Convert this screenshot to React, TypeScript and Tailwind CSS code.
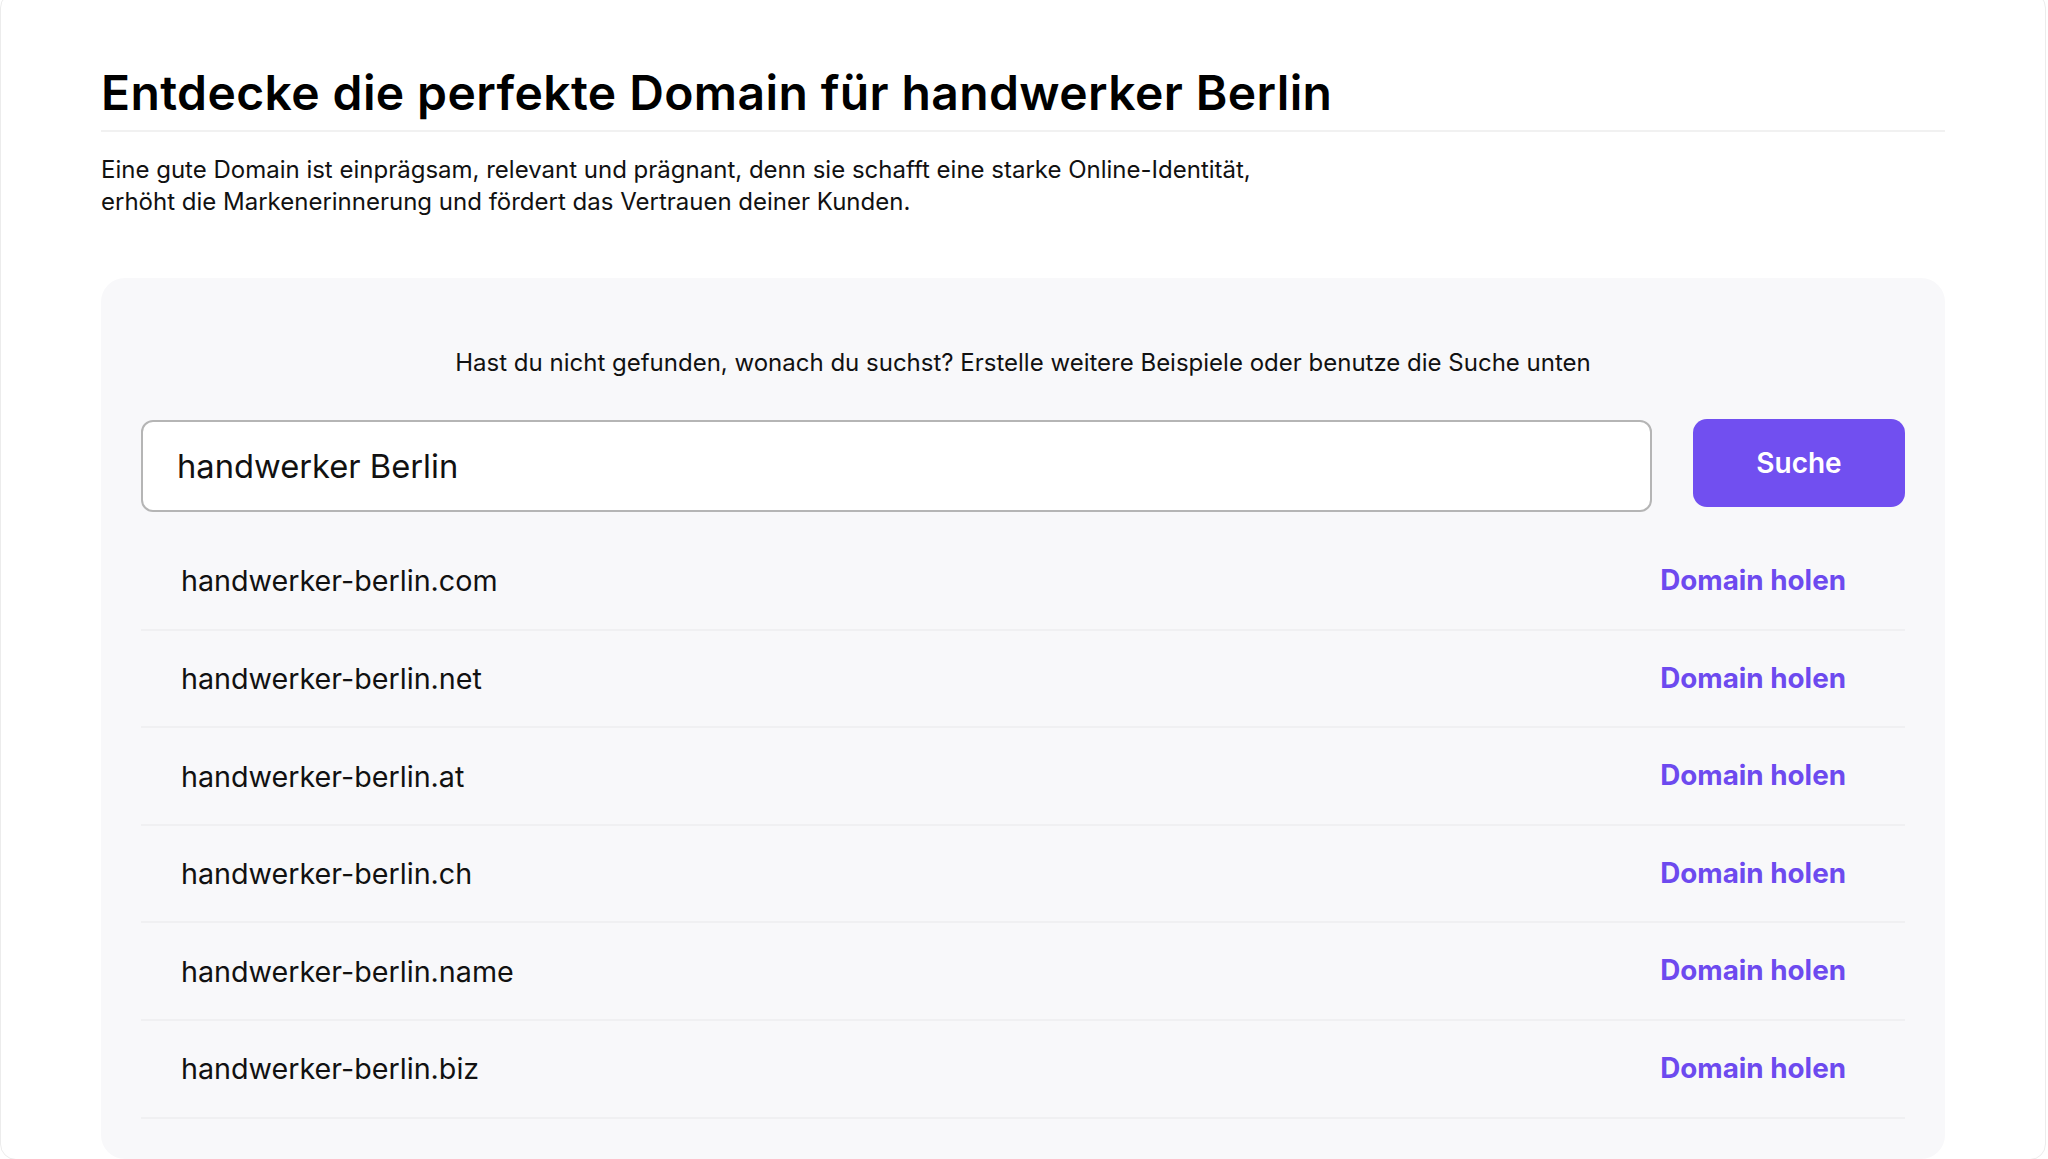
import React, { useState } from 'react';

const extensions = ['com', 'net', 'at', 'ch', 'name', 'biz'];

const App: React.FC = () => {
    const [query, setQuery] = useState('handwerker Berlin');
    const slug = query.trim().toLowerCase().replace(/\s+/g, '-');

    return (
        <div className="min-h-screen bg-white font-['Inter','Noto_Sans',sans-serif] text-[#0a0a0a] overflow-hidden">
            <div className="-mt-2 mr-[2px] rounded-2xl border border-[#ececec] bg-white px-[100px] pt-[71px]">
                {/* Header */}
                <h1 className="border-b-2 border-[#f1f1f1] pb-[8px] text-[48px] font-semibold leading-[1.2] tracking-[0.4px] text-black">
                    Entdecke die perfekte Domain für handwerker Berlin
                </h1>
                <p className="mt-[22px] text-[24px] leading-[32px] text-[#111]">
                    Eine gute Domain ist einprägsam, relevant und prägnant, denn sie schafft eine starke Online-Identität,
                    <br />
                    erhöht die Markenerinnerung und fördert das Vertrauen deiner Kunden.
                </p>

                {/* Suche */}
                <div className="mt-[60px] rounded-3xl bg-[#f8f8fa] px-10 pt-[69px] pb-10">
                    <p className="text-center text-[24px] leading-[32px] text-[#111]">
                        Hast du nicht gefunden, wonach du suchst? Erstelle weitere Beispiele oder benutze die Suche unten
                    </p>

                    <div className="mt-[41px] flex items-start gap-[41px]">
                        <input
                            value={query}
                            onChange={(e) => setQuery(e.target.value)}
                            className="h-[92px] flex-1 rounded-xl border-2 border-[#b5b5b5] bg-white pl-[34px] text-[32.7px] text-[#111] outline-none"
                        />
                        <button className="-mt-px h-[88px] w-[212px] rounded-[14px] bg-[#714ff0] text-[28px] font-semibold text-white">
                            Suche
                        </button>
                    </div>

                    <div className="mt-[21.5px]">
                        {extensions.map((ext) => (
                            <div
                                key={ext}
                                className="flex h-[97.6px] items-center justify-between border-b-2 border-[#f0f0f2] pl-10 pr-[59px]"
                            >
                                <span className="text-[28.7px] text-[#111]">
                                    {slug}.{ext}
                                </span>
                                <a href="#" className="text-[27.8px] font-bold text-[#6d4aef]">
                                    Domain holen
                                </a>
                            </div>
                        ))}
                    </div>
                </div>
            </div>
        </div>
    );
};

export default App;
